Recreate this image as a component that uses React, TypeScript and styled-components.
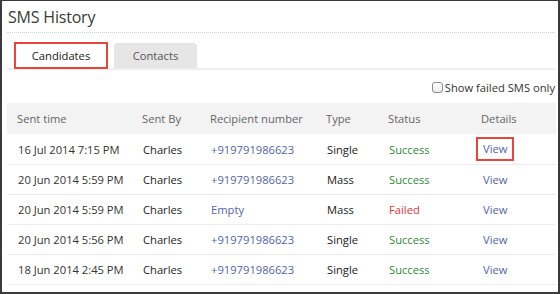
import * as React from "react";
import styled, { createGlobalStyle } from "styled-components";

const GlobalStyle = createGlobalStyle`
  html, body {
    margin: 0;
    padding: 0;
    background: #ffffff;
  }
  * {
    box-sizing: border-box;
  }
`;

const Frame = styled.div`
  width: 560px;
  height: 294px;
  border: 2px solid #3b3b3b;
  border-top-width: 1px;
  background: #fff;
  font-family: "Open Sans", "Liberation Sans", sans-serif;
  color: #333;
  padding: 0 3px 0 5px;
  overflow: hidden;
`;

const Title = styled.h1`
  margin: 0;
  padding: 5px 0 0 1px;
  height: 32px;
  font-size: 16px;
  font-weight: 400;
  color: #3a3a3a;
  letter-spacing: -0.2px;
  border-bottom: 1px dotted #d4d4d4;
`;

const TabBar = styled.div`
  display: flex;
  align-items: flex-end;
  gap: 6px;
  margin-top: 9px;
  padding-left: 7px;
  height: 28px;
  border-bottom: 2px solid #eeeeee;
`;

const Tab = styled.div<{ $active?: boolean }>`
  display: flex;
  align-items: center;
  justify-content: center;
  height: ${(p) => (p.$active ? "27px" : "25px")};
  width: ${(p) => (p.$active ? "94px" : "83px")};
  font-size: 11.2px;
  color: ${(p) => (p.$active ? "#222" : "#555")};
  background: ${(p) => (p.$active ? "#fff" : "#e6e6e6")};
  border: ${(p) => (p.$active ? "2px solid #e8453c" : "none")};
  border-radius: ${(p) => (p.$active ? "0" : "4px 4px 0 0")};
  margin-bottom: ${(p) => (p.$active ? "-1px" : "0")};
`;

const FilterRow = styled.div`
  display: flex;
  justify-content: flex-end;
  align-items: center;
  height: 33px;
  padding-top: 2px;
  font-size: 11.2px;
  color: #333;
`;

const Check = styled.span`
  display: inline-block;
  width: 11px;
  height: 11px;
  border: 1px solid #8a8a8a;
  border-radius: 3px;
  background: linear-gradient(#fff, #ececec);
  margin-right: 2px;
`;

const Table = styled.table`
  width: 549px;
  border-collapse: collapse;
  table-layout: fixed;
  font-size: 11.2px;
`;

const Th = styled.th<{ $w: number }>`
  width: ${(p) => p.$w}px;
  text-align: left;
  font-weight: 400;
  color: #666;
  background: #f3f3f3;
  height: 31px;
  padding: 0 0 0 10px;
`;

const Td = styled.td<{ $color?: string }>`
  height: 30px;
  padding: 1px 0 0 11px;
  color: ${(p) => p.$color || "#222"};
  border-bottom: 1px solid #ececec;
  white-space: nowrap;
`;

const ViewLink = styled.span<{ $boxed?: boolean }>`
  display: inline-block;
  color: #5465a8;
  padding: 2px 5px 3px;
  margin-left: -6px;
  border: 2px solid ${(p) => (p.$boxed ? "#e8453c" : "transparent")};
`;

type Row = {
  time: string;
  by: string;
  to: string;
  type: string;
  status: "Success" | "Failed";
};

const rows: Row[] = [
  { time: "16 Jul 2014 7:15 PM", by: "Charles", to: "+919791986623", type: "Single", status: "Success" },
  { time: "20 Jun 2014 5:59 PM", by: "Charles", to: "+919791986623", type: "Mass", status: "Success" },
  { time: "20 Jun 2014 5:59 PM", by: "Charles", to: "Empty", type: "Mass", status: "Failed" },
  { time: "20 Jun 2014 5:56 PM", by: "Charles", to: "+919791986623", type: "Single", status: "Success" },
  { time: "18 Jun 2014 2:45 PM", by: "Charles", to: "+919791986623", type: "Single", status: "Success" },
];

const cols = [
  { label: "Sent time", w: 125 },
  { label: "Sent By", w: 68 },
  { label: "Recipient number", w: 116 },
  { label: "Type", w: 62 },
  { label: "Status", w: 93 },
  { label: "Details", w: 85 },
];

export default function App() {
  return (
    <>
      <GlobalStyle />
      <Frame>
        <Title>SMS History</Title>
        <TabBar>
          <Tab $active>Candidates</Tab>
          <Tab>Contacts</Tab>
        </TabBar>
        <FilterRow>
          <Check />
          Show failed SMS only
        </FilterRow>
        <Table>
          <thead>
            <tr>
              {cols.map((c) => (
                <Th key={c.label} $w={c.w}>
                  {c.label}
                </Th>
              ))}
            </tr>
          </thead>
          <tbody>
            {rows.map((r, i) => (
              <tr key={i}>
                <Td $color="#333">{r.time}</Td>
                <Td>{r.by}</Td>
                <Td $color="#5465a8">{r.to}</Td>
                <Td>{r.type}</Td>
                <Td $color={r.status === "Success" ? "#2f8a3a" : "#e2343a"}>{r.status}</Td>
                <Td>
                  <ViewLink $boxed={i === 0}>View</ViewLink>
                </Td>
              </tr>
            ))}
          </tbody>
        </Table>
      </Frame>
    </>
  );
}
